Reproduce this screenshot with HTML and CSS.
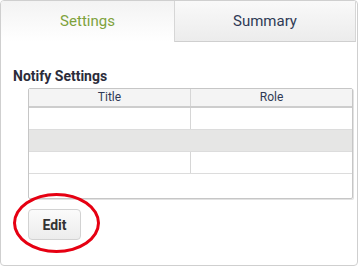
FILE: index.html
```html
<!DOCTYPE html>
<html lang="en">
<head>
  <meta name="viewport" content="width=device-width, initial-scale=1.0">
  <title>Notify Settings</title>
  <link rel="stylesheet" href="styles.css">
</head>
<body>
  <div class="panel">
    <!-- Tabs -->
    <div class="tabs">
      <div class="tab active">Settings</div>
      <div class="tab">Summary</div>
    </div>

    <!-- Settings content -->
    <div class="content">
      <h3 class="section-title">Notify Settings</h3>
      <div class="grid">
        <div class="grid-head">
          <div class="cell">Title</div>
          <div class="cell">Role</div>
        </div>
        <div class="grid-row">
          <div class="cell"></div>
          <div class="cell"></div>
        </div>
        <div class="grid-row alt">
          <div class="cell"></div>
          <div class="cell"></div>
        </div>
        <div class="grid-row">
          <div class="cell"></div>
          <div class="cell"></div>
        </div>
      </div>
      <div class="actions">
        <button class="btn">Edit</button>
        <span class="highlight"></span>
      </div>
    </div>
  </div>
</body>
</html>
```

FILE: styles.css
```css
* {
  box-sizing: border-box;
}
body {
  margin: 0;
  font-family: Roboto, "Liberation Sans", Arial, sans-serif;
  color: #333;
  background: #fff;
}
.panel {
  width: 358px;
  height: 266px;
  border: 1px solid #cfcfcf;
  border-radius: 4px;
  overflow: hidden;
}
.tabs {
  display: flex;
  height: 41px;
}
.tab {
  display: flex;
  align-items: center;
  justify-content: center;
  font-size: 15px;
  color: #2f3a55;
  background: linear-gradient(#f9f9f9, #ececec);
  border-bottom: 1px solid #cfcfcf;
}
.tab.active {
  width: 174px;
  flex: none;
  color: #7ea23c;
  background: linear-gradient(#f3f3f3, #fff);
  border-bottom: none;
  border-right: 1px solid #d6d6d6;
  padding-bottom: 1px;
}
.tab:last-child {
  flex: 1;
  margin-right: 1px;
  border-right: 1px solid #d6d6d6;
}
.content {
  padding: 26px 4px 0 12px;
}
.section-title {
  margin: 0 0 3px;
  font-size: 14px;
  font-weight: bold;
  line-height: 17px;
  color: #2c2c3a;
}
.grid {
  margin-left: 15px;
  width: 325px;
  height: 111px;
  border: 1px solid #c6c6c6;
  border-radius: 2px;
  box-shadow: 1px 1px 0 #e2e2e2;
}
.grid-head,
.grid-row {
  display: grid;
  grid-template-columns: 161px 1fr;
}
.grid-head {
  height: 19px;
  background: #f4f4f4;
  border-bottom: 2px solid #cdcdcd;
}
.grid-head .cell {
  font-size: 12px;
  line-height: 17px;
  text-align: center;
  color: #2f3a55;
}
.cell + .cell {
  border-left: 1px solid #d6d6d6;
}
.grid-row {
  height: 22px;
  border-bottom: 1px solid #dcdcdc;
}
.grid-row.alt {
  background: #e6e6e5;
}
.grid-row.alt .cell + .cell {
  border-left-color: #e6e6e5;
}
.actions {
  position: relative;
  margin: 10px 0 0 15px;
}
.btn {
  width: 53px;
  height: 31px;
  font-family: inherit;
  font-size: 14px;
  font-weight: bold;
  color: #333;
  background: linear-gradient(#fbfbfb, #ececec);
  border: 1px solid #d2d2d2;
  border-radius: 4px;
}
.highlight {
  position: absolute;
  left: -15px;
  top: -16px;
  width: 87px;
  height: 60px;
  border: 3px solid #e60012;
  border-radius: 50%;
}
```
